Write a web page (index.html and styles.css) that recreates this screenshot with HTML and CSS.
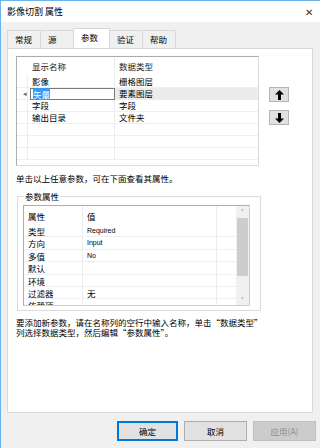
FILE: index.html
```html
<!DOCTYPE html>
<html lang="zh-CN">
<head>
  <meta charset="UTF-8" />
  <title>影像切割 属性</title>
  <link rel="stylesheet" href="styles.css">
</head>
<body>
  <div class="window">
    <div class="titlebar">
      <span class="title">影像切割 属性</span>
      <span class="close">✕</span>
    </div>

    <div class="content">
      <div class="tabs">
        <div class="tab">常规</div>
        <div class="tab">源</div>
        <div class="tab active">参数</div>
        <div class="tab">验证</div>
        <div class="tab">帮助</div>
      </div>

      <div class="panel">
        <div class="top">
          <div class="list">
            <div class="row head">
              <div class="mark"></div>
              <div class="cell">显示名称</div>
              <div class="cell">数据类型</div>
            </div>
            <div class="row">
              <div class="mark"></div>
              <div class="cell">影像</div>
              <div class="cell">栅格图层</div>
            </div>
            <div class="row current">
              <div class="mark">◂</div>
              <div class="cell edit"><span class="sel">矢量</span></div>
              <div class="cell">要素图层</div>
            </div>
            <div class="row">
              <div class="mark"></div>
              <div class="cell">字段</div>
              <div class="cell">字段</div>
            </div>
            <div class="row">
              <div class="mark"></div>
              <div class="cell">输出目录</div>
              <div class="cell">文件夹</div>
            </div>
            <div class="row"><div class="mark"></div><div class="cell"></div><div class="cell"></div></div>
            <div class="row"><div class="mark"></div><div class="cell"></div><div class="cell"></div></div>
            <div class="row last"><div class="mark"></div><div class="cell"></div><div class="cell"></div></div>
          </div>

          <div class="movers">
            <button class="mover">
              <svg width="9" height="10" viewBox="0 0 9 10"><path d="M4.5 0 L9 4.5 H6 V10 H3 V4.5 H0 Z" fill="#000"/></svg>
            </button>
            <button class="mover">
              <svg width="9" height="10" viewBox="0 0 9 10"><path d="M4.5 10 L9 5.5 H6 V0 H3 V5.5 H0 Z" fill="#000"/></svg>
            </button>
          </div>
        </div>

        <p class="hint">单击以上任意参数，可在下面查看其属性。</p>

        <fieldset class="group">
          <legend>参数属性</legend>
          <div class="props">
            <div class="grid">
              <div class="prow phead"><div class="pc">属性</div><div class="pc">值</div><div class="pc"></div></div>
              <div class="prow"><div class="pc">类型</div><div class="pc latin">Required</div><div class="pc"></div></div>
              <div class="prow"><div class="pc">方向</div><div class="pc latin">Input</div><div class="pc"></div></div>
              <div class="prow"><div class="pc">多值</div><div class="pc latin">No</div><div class="pc"></div></div>
              <div class="prow"><div class="pc">默认</div><div class="pc"></div><div class="pc"></div></div>
              <div class="prow"><div class="pc">环境</div><div class="pc"></div><div class="pc"></div></div>
              <div class="prow"><div class="pc">过滤器</div><div class="pc">无</div><div class="pc"></div></div>
              <div class="prow"><div class="pc">依赖项</div><div class="pc"></div><div class="pc"></div></div>
            </div>
            <div class="scrollbar">
              <div class="arrow">˄</div>
              <div class="track"><div class="thumb"></div></div>
              <div class="arrow">˅</div>
            </div>
          </div>
        </fieldset>

        <p class="note">要添加新参数，请在名称列的空行中输入名称，单击“数据类型”列选择数据类型，然后编辑“参数属性”。</p>
      </div>

      <div class="footer">
        <button class="btn default">确定</button>
        <button class="btn cancel">取消</button>
        <button class="btn apply" disabled>应用(A)</button>
      </div>
    </div>
  </div>
</body>
</html>
```

FILE: styles.css
```css
* {
  box-sizing: border-box;
}

body {
  margin: 0;
  font-family: "Noto Sans CJK SC", "Noto Sans", sans-serif;
  font-size: 8.5px;
  color: #000;
  background-color: #f0f0f0;
}

.window {
  width: 320px;
  height: 448px;
  border-left: 1px solid #6cb2ea;
  border-top: 1px solid #6cb2ea;
  display: flex;
  flex-direction: column;
  overflow: hidden;
}

.titlebar {
  height: 21px;
  background-color: #fff;
  display: flex;
  align-items: center;
  justify-content: space-between;
  padding: 0 7px 0 6px;
}

.title {
  font-size: 9px;
}

.close {
  font-size: 10px;
  color: #333;
}

.content {
  flex: 1;
  background-color: #f0f0f0;
  padding: 7px 0 0 6px;
}

/* Onglets */
.tabs {
  display: flex;
  align-items: flex-end;
  height: 19px;
}

.tab {
  width: 34px;
  height: 18px;
  line-height: 16px;
  padding-left: 7px;
  border: 1px solid #d9d9d9;
  border-bottom: none;
  margin-right: -1px;
  background-color: #f0f0f0;
}

.tab.active {
  width: 37px;
  height: 20px;
  line-height: 17px;
  background-color: #fff;
  position: relative;
  z-index: 1;
  border-color: #d9d9d9;
}

.panel {
  width: 306px;
  height: 365px;
  background-color: #fff;
  border: 1px solid #d9d9d9;
  padding: 7px 8px 0 8px;
}

/* Liste des paramètres */
.top {
  display: flex;
  align-items: flex-start;
}

.list {
  width: 243px;
  height: 110px;
  border: 1px solid #adadad;
  border-right-color: #dcdcdc;
  border-bottom-color: #dcdcdc;
  overflow: hidden;
}

.row {
  display: grid;
  grid-template-columns: 11px 87px 1fr;
  height: 12px;
  border-bottom: 1px solid #f0f0f0;
}

.row.head {
  height: 19px;
  border-bottom: none;
  align-items: center;
}

.row .mark,
.row .cell {
  border-right: 1px solid #ececec;
  line-height: 11px;
  padding-left: 4px;
  white-space: nowrap;
}

.row .mark {
  padding-left: 6px;
  font-size: 7px;
  color: #666;
}

.row .cell:last-child {
  border-right: none;
}

.row.head .cell {
  line-height: 19px;
  color: #222;
}

.row.current .cell:last-child {
  background-color: #ececec;
}

.cell.edit {
  border: 1px solid #7a7a7a;
  margin-left: 2px;
  padding-left: 2px;
  line-height: 10px;
}

.sel {
  background-color: #3399ff;
  color: #fff;
}

.movers {
  display: flex;
  flex-direction: column;
  gap: 8px;
  margin: 31px 0 0 10px;
}

.mover {
  width: 20px;
  height: 15px;
  padding: 0;
  border: 1px solid #b5b5b5;
  background-color: #e1e1e1;
  display: flex;
  align-items: center;
  justify-content: center;
}

.hint {
  margin: 6px 0 0;
  line-height: 12px;
}

/* Groupe des propriétés */
.group {
  width: 244px;
  height: 120px;
  margin: 7px 0 0 1px;
  padding: 4px 10px 0 5px;
  border: 1px solid #dcdcdc;
}

.group legend {
  padding: 0 1px;
  margin-left: 1px;
  line-height: 10px;
}

.props {
  display: flex;
  width: 227px;
  height: 101px;
  border: 1px solid #adadad;
  border-right-color: #cfcfcf;
  border-bottom-color: #cfcfcf;
  overflow: hidden;
}

.grid {
  flex: 1;
}

.prow {
  display: grid;
  grid-template-columns: 59px 134px 1fr;
  height: 12.4px;
  border-bottom: 1px solid #f0f0f0;
}

.prow.phead {
  height: 19px;
  border-bottom: none;
}

.pc {
  padding-left: 4px;
  line-height: 12px;
  border-right: 1px solid #ececec;
  white-space: nowrap;
}

.pc:last-child {
  border-right: none;
}

.phead .pc {
  line-height: 20px;
}

.pc.latin {
  font-family: "Liberation Sans", sans-serif;
  font-size: 7px;
}

.scrollbar {
  width: 13px;
  background-color: #f0f0f0;
  display: flex;
  flex-direction: column;
}

.scrollbar .arrow {
  height: 11px;
  text-align: center;
  line-height: 13px;
  font-size: 8px;
  color: #606060;
}

.scrollbar .track {
  flex: 1;
  padding: 1px 1px;
}

.thumb {
  height: 58px;
  background-color: #cdcdcd;
}

.note {
  margin: 7px 0 0;
  line-height: 9.5px;
  width: 244px;
}

/* Boutons du bas */
.footer {
  display: flex;
  gap: 6px;
  margin: 8px 0 0 110px;
}

.btn {
  height: 20px;
  width: 63px;
  font-family: "Noto Sans CJK SC", sans-serif;
  font-size: 8.5px;
  background-color: #e1e1e1;
  border: 1px solid #adadad;
  padding: 0;
}

.btn.default {
  width: 61px;
  border: 2px solid #0078d7;
}

.btn.apply {
  background-color: #cccccc;
  border-color: #bfbfbf;
  color: #8d8d8d;
}
```
